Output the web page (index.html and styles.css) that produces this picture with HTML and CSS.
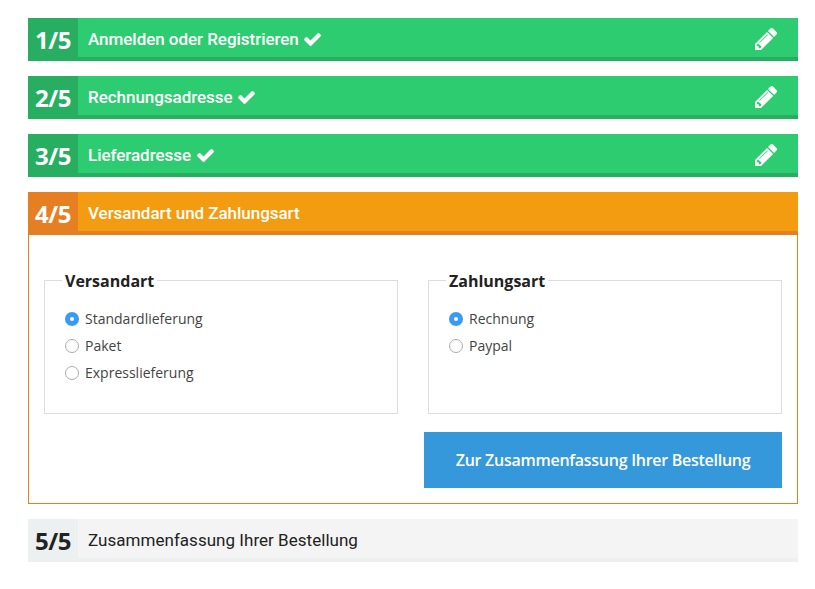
FILE: index.html
```html
<!DOCTYPE html>
<html lang="de">
<head>
<meta charset="utf-8">
<title>Kasse</title>
<link rel="stylesheet" href="styles.css">
</head>
<body>
<svg class="defs" width="0" height="0" aria-hidden="true">
<symbol id="check" viewBox="121 334 1550 1188"><path d="M1671 566q0 40-28 68l-724 724-136 136q-28 28-68 28t-68-28l-136-136-362-362q-28-28-28-68t28-68l136-136q28-28 68-28t68 28l294 295 656-657q28-28 68-28t68 28l136 136q28 28 28 68z"/></symbol>
<symbol id="pencil" viewBox="0 149 1515 1515"><path d="M363 1536l91-91-235-235-91 91v107h128v128h107zm523-928q0-22-22-22-10 0-17 7l-542 542q-7 7-7 17 0 22 22 22 10 0 17-7l542-542q7-7 7-17zm-54-192l416 416-832 832h-416v-416zm683 96q0 53-37 90l-166 166-416-416 166-165q36-38 90-38 53 0 91 38l235 234q37 39 37 91z"/></symbol>
</svg>
<main class="checkout">
  <section class="step done">
    <header class="bar"><span class="number">1/5</span><h2 class="title">Anmelden oder Registrieren<svg class="check"><use href="#check"/></svg></h2><svg class="pencil"><use href="#pencil"/></svg></header>
  </section>
  <section class="step done">
    <header class="bar"><span class="number">2/5</span><h2 class="title">Rechnungsadresse<svg class="check"><use href="#check"/></svg></h2><svg class="pencil"><use href="#pencil"/></svg></header>
  </section>
  <section class="step done">
    <header class="bar"><span class="number">3/5</span><h2 class="title">Lieferadresse<svg class="check"><use href="#check"/></svg></h2><svg class="pencil"><use href="#pencil"/></svg></header>
  </section>
  <section class="step active">
    <header class="bar"><span class="number">4/5</span><h2 class="title">Versandart und Zahlungsart</h2></header>
    <form class="panel">
      <div class="groups">
        <fieldset class="group">
          <legend>Versandart</legend>
          <label><input type="radio" name="versand" checked>Standardlieferung</label>
          <label><input type="radio" name="versand">Paket</label>
          <label><input type="radio" name="versand">Expresslieferung</label>
        </fieldset>
        <fieldset class="group">
          <legend>Zahlungsart</legend>
          <label><input type="radio" name="zahlung" checked>Rechnung</label>
          <label><input type="radio" name="zahlung">Paypal</label>
        </fieldset>
      </div>
      <button type="button" class="next">Zur Zusammenfassung Ihrer Bestellung</button>
    </form>
  </section>
  <section class="step">
    <header class="bar"><span class="number">5/5</span><h2 class="title">Zusammenfassung Ihrer Bestellung</h2></header>
  </section>
</main>
</body>
</html>
```
FILE: styles.css
```css
* { box-sizing: border-box; }
body { margin: 0; background: #fff; color: #222; font-family: "Open Sans", sans-serif; }
.defs { display: none; }
.checkout { display: flex; flex-direction: column; gap: 15px; width: 770px; margin: 18px 0 0 28px; }
.step { --main: #f4f4f4; --edge: #ecf0f1; --text: #222; color: var(--text); }
.done { --main: #2ecc71; --edge: #27ae60; --text: #fff; }
.active { --main: #f39c12; --edge: #e67e22; --text: #fff; }
.bar { display: flex; height: 43px; background: var(--main); border-bottom: 4px solid var(--edge); }
.number { width: 50px; height: 43px; flex: none; background: var(--edge); text-align: center; font-size: 24px; font-weight: 700; line-height: 43px; letter-spacing: -.5px; }
.title { display: flex; align-items: center; flex: 1; height: 42px; margin: 0; padding-left: 10px; font: 500 17px/42px Roboto, sans-serif; letter-spacing: -.04px; white-space: nowrap; }
.step:last-child .title { font-weight: 400; letter-spacing: .03px; }
.check { width: 17px; height: 13px; margin-left: 5.5px; fill: currentColor; }
.pencil { width: 22px; height: 22px; margin: 10px 21px 0 0; fill: currentColor; }
.panel { height: 269px; padding: 36px 15px 15px; border: 1px solid var(--edge); border-top: 0; color: #444; }
.groups { display: grid; grid-template-columns: 354px 354px; gap: 30px; }
.group { min-width: 0; height: 143px; margin: 0; padding: 16px 20px 0; border: 1px solid #ddd; }
legend { margin-left: -3px; padding: 2px 3px 0; color: #222; font-size: 16px; font-weight: 700; line-height: 16px; }
.group label { display: flex; align-items: center; height: 27px; font-size: 14px; line-height: 27px; }
.group input { appearance: none; width: 14px; height: 14px; margin: 0 6px 0 0; border: 1px solid #aaa; border-radius: 50%; background: #fff; }
.group input:checked { border: 5px solid #3b99fc; }
.next { display: block; width: 358px; height: 56px; margin: 18px 0 0 auto; padding: 0; border: 0; background: #3498db; color: #fff; font: 600 16px "Open Sans", sans-serif; letter-spacing: -.27px; }
```
